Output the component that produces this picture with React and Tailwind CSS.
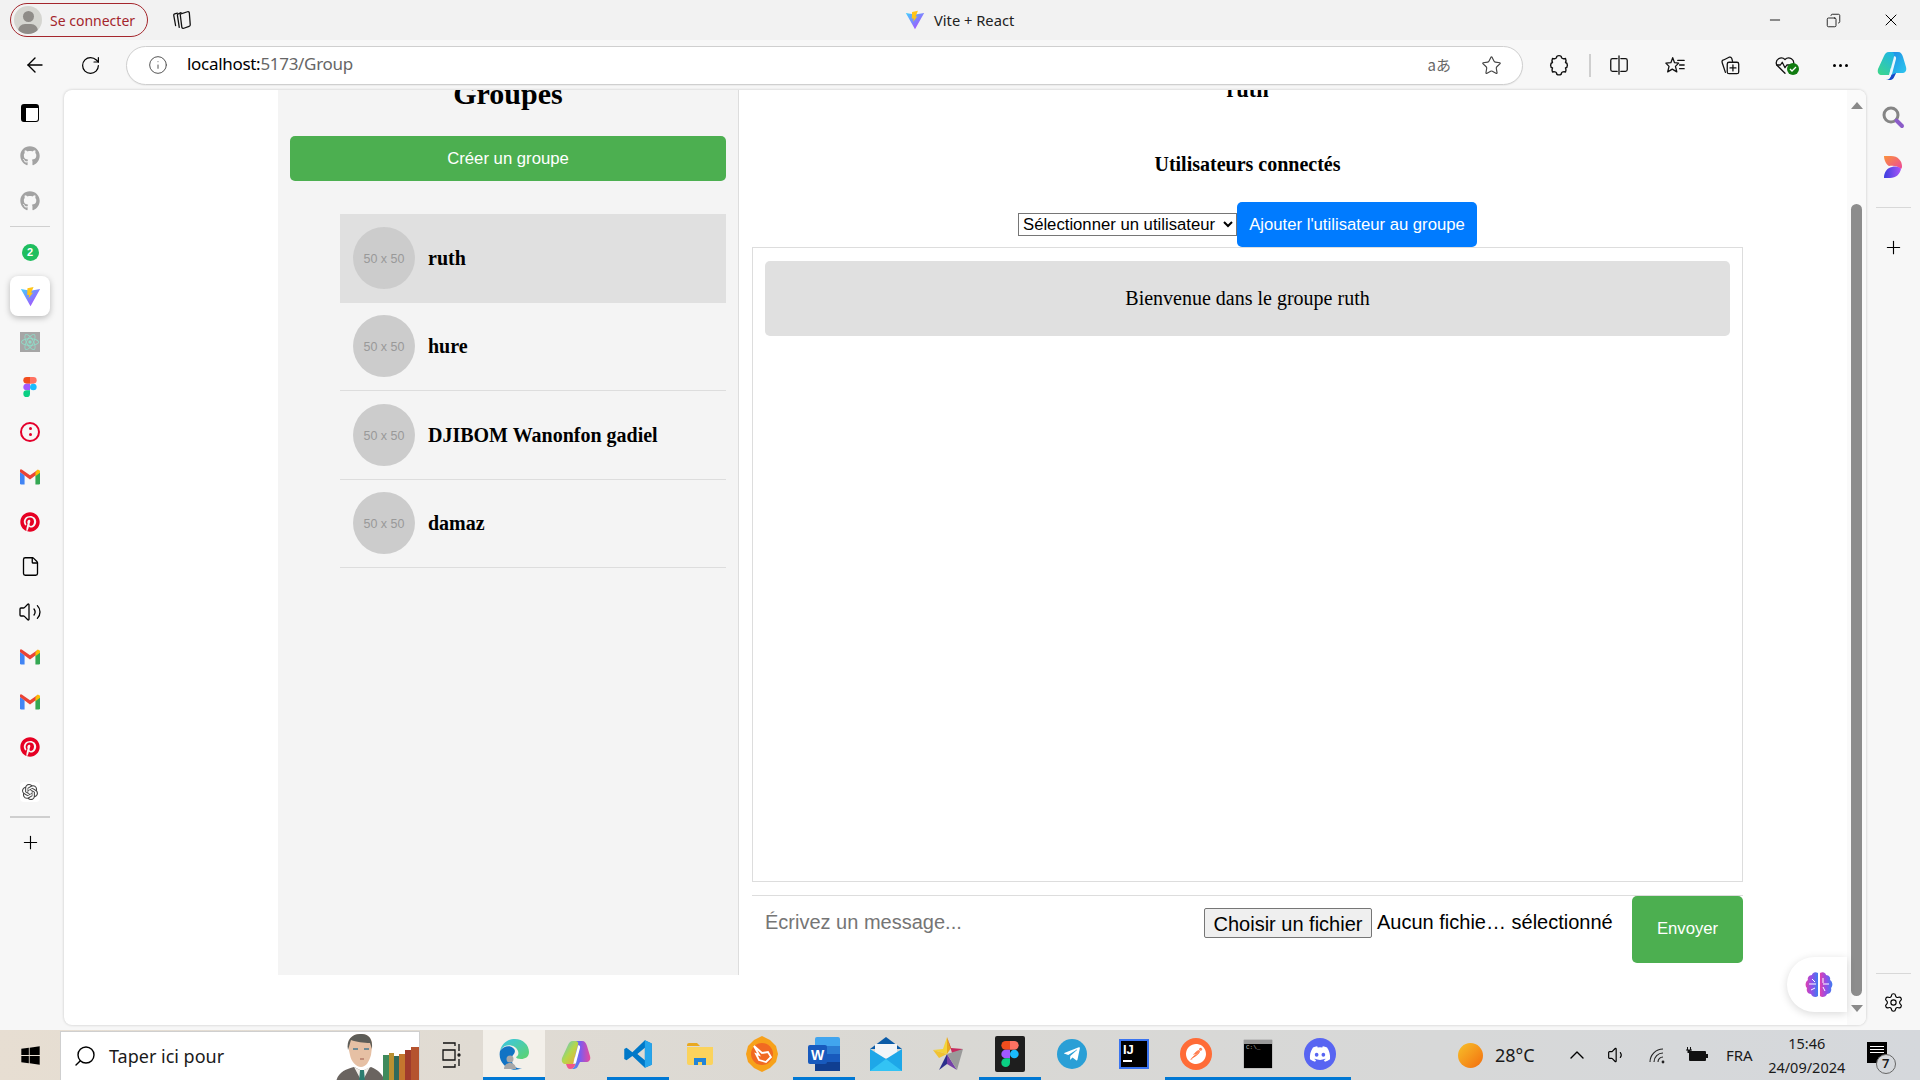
import { ArrowLeft, RotateCw, Info, Star, Plus, Search, Settings, X, Minus, ChevronUp, Volume1, Volume2, File, Copy } from 'lucide-react';
import { FaGithub, FaPinterest, FaTelegramPlane, FaDiscord, FaWindows } from 'react-icons/fa';
import { SiOpenai, SiReact, SiPostman } from 'react-icons/si';

const groups = ['ruth', 'hure', 'DJIBOM Wanonfon gadiel', 'damaz'];

function ViteLogo({ size = 22 }) {
  return (
    <svg width={size} height={size} viewBox="0 0 24 24">
      <defs>
        <linearGradient id="viteA" x1="0" y1="0" x2="1" y2="1">
          <stop offset="0" stopColor="#41d1ff" />
          <stop offset="1" stopColor="#bd34fe" />
        </linearGradient>
      </defs>
      <path d="M1 3.500 12 5.500 23 3.500 12 23Z" fill="url(#viteA)" />
      <path d="M15.500 1 8.500 2.500 8.200 10.500 10.500 10 9.800 14 15 7.500 12.600 8Z" fill="#ffc517" />
    </svg>
  );
}

function FigmaLogo({ size = 22 }) {
  return (
    <svg width={size} height={size} viewBox="0 0 24 36">
      <path d="M12 0H6a6 6 0 0 0 0 12h6Z" fill="#f24e1e" />
      <path d="M12 0h6a6 6 0 0 1 0 12h-6Z" fill="#ff7262" />
      <path d="M12 12H6a6 6 0 0 0 0 12h6Z" fill="#a259ff" />
      <circle cx="18" cy="18" r="6" fill="#1abcfe" />
      <path d="M6 24h6v6a6 6 0 1 1-6-6Z" fill="#0acf83" />
    </svg>
  );
}

function GmailLogo() {
  return (
    <svg width={20} height={16} viewBox="0 0 24 18">
      <path d="M0 3v13.500A1.500 1.500 0 0 0 1.500 18H5.500V7Z" fill="#4285f4" />
      <path d="M18.500 18h4a1.500 1.500 0 0 0 1.500-1.500V3l-5.500 4Z" fill="#34a853" />
      <path d="M0 3 12 12 24 3 21.500 .3 12 7 2.500 .3A1.600 1.600 0 0 0 0 3Z" fill="#ea4335" />
      <path d="M18.500 3.600V8L24 4V2.500C24 .4 22 -.4 20.500 .6Z" fill="#fbbc04" />
    </svg>
  );
}

function CopilotLogo({ size = 32 }) {
  return (
    <svg width={size} height={size} viewBox="0 0 32 32">
      <defs>
        <linearGradient id="copA" x1="0" y1="0" x2="1" y2="1">
          <stop offset="0" stopColor="#1f7fe6" />
          <stop offset="0.6" stopColor="#27b3ea" />
          <stop offset="1" stopColor="#33cdf0" />
        </linearGradient>
        <linearGradient id="copB" x1="0.8" y1="0" x2="0.2" y2="1">
          <stop offset="0" stopColor="#1fb6e4" />
          <stop offset="1" stopColor="#3bd58f" />
        </linearGradient>
      </defs>
      <path d="M15 3H22C25 3 26 5 27 8L30 18C31 22 29 24 26 24H20L17.500 29C16.500 30.500 15 31 13 31H10C13 31 14.500 29 15.500 26Z" fill="url(#copA)" />
      <path d="M13 3C10 3 9 5 8 7L2 20C1 24 3 26 6 26H13L18 7C19 4 17 3 15 3Z" fill="url(#copB)" />
      <path d="M18 7.500 14 23C13.500 25 15 26 16 25L20 10C20.500 8 19 6.500 18 7.500Z" fill="#e8f7fd" />
      <path d="M10 31C13 31 14.500 29 15.500 26L20 24 17.500 29C16.500 30.500 15 31 13 31Z" fill="#1b46c8" />
    </svg>
  );
}

function EdgeLogo() {
  return (
    <svg width={32} height={32} viewBox="0 0 32 32">
      <defs>
        <linearGradient id="edgeA" x1="0" y1="0" x2="1" y2="1">
          <stop offset="0" stopColor="#39c6e8" />
          <stop offset="1" stopColor="#5fd36b" />
        </linearGradient>
      </defs>
      <path d="M2 13C4 4 11 1 17 1c8 0 14 6 14 13 0 5-4 7-8 7-3 0-5-1-5-2 2-1 3-3 2-6C18 8 12 6 7 8c-2 1-4 3-5 5Z" fill="url(#edgeA)" />
      <path d="M2 13c3-5 10-6 13-3 3 2 2 5 0 7-2 3-2 8 2 12 2 1 5 2 7 1-5 3-13 2-18-3C2 23 1 18 2 13Z" fill="#1173c4" />
      <circle cx="12" cy="21" r="3.500" fill="#a7a7a7" />
      <path d="M6 31c0-4 3-6 6-6s6 2 6 6Z" fill="#a7a7a7" />
    </svg>
  );
}

function CopilotTask() {
  return (
    <svg width={32} height={32} viewBox="0 0 32 32">
      <defs>
        <linearGradient id="ctA" x1="0" y1="0" x2="1" y2="0">
          <stop offset="0" stopColor="#2fb4e9" />
          <stop offset="0.5" stopColor="#7b5cf0" />
          <stop offset="1" stopColor="#e9499b" />
        </linearGradient>
        <linearGradient id="ctB" x1="0" y1="0" x2="1" y2="1">
          <stop offset="0" stopColor="#4fc3e8" />
          <stop offset="0.5" stopColor="#b5d84a" />
          <stop offset="1" stopColor="#f6a13c" />
        </linearGradient>
      </defs>
      <path d="M15 3H22C25 3 26 5 27 8L30 18C31 22 29 24 26 24H20L17.500 29C16.500 30.500 15 31 13 31H10C13 31 14.500 29 15.500 26Z" fill="url(#ctA)" />
      <path d="M13 3C10 3 9 5 8 7L2 20C1 24 3 26 6 26H13L18 7C19 4 17 3 15 3Z" fill="url(#ctB)" />
      <path d="M18 7.500 14 23C13.500 25 15 26 16 25L20 10C20.500 8 19 6.500 18 7.500Z" fill="#fff" />
      <path d="M6 26H13C14 26 14.500 26 15.500 26 14.500 29 13 31 10 31 8 31 7 29 6 26Z" fill="#f0578a" />
    </svg>
  );
}

function VsCode() {
  return (
    <svg width={30} height={30} viewBox="0 0 24 24">
      <path d="M17.500 1 23 3.500v17L17.500 23 7.500 13.500 2.800 17 1 16V8l1.800-1 4.700 3.500ZM17.500 7l-6 5 6 5Z" fill="#0078c8" />
      <path d="M17.500 1 23 3.500v17L17.500 23V17L17.500 7Z" fill="#25a5ec" />
    </svg>
  );
}

function FolderIcon() {
  return (
    <svg width={28} height={28} viewBox="0 0 28 28">
      <path d="M1 5a2 2 0 0 1 2-2h8l3 3H1Z" fill="#e9a820" />
      <path d="M1 7h26v16a2 2 0 0 1-2 2H3a2 2 0 0 1-2-2Z" fill="#fbd35c" />
      <path d="M8 18h12v7h-4v-3h-4v3H8Z" fill="#2284d8" />
    </svg>
  );
}

function OrangeApp() {
  return (
    <svg width={32} height={36} viewBox="0 0 32 36">
      <path d="M16 0l8 4 6 6 2 8-2 8-6 6-8 4-8-4-6-6-2-8 2-8 6-6Z" fill="#f7a11a" />
      <circle cx="16" cy="18" r="11" fill="#f16a22" />
      <path d="M8 10l8 7 6-1 3 5-5 5-7-2-3-6 3 1Z" fill="none" stroke="#fff" strokeWidth="1.800" />
    </svg>
  );
}

function WordIcon() {
  return (
    <svg width={32} height={34} viewBox="0 0 32 34">
      <rect x="7" y="0" width="25" height="34" rx="2" fill="#41a5ee" />
      <rect x="7" y="9" width="25" height="8" fill="#2b7cd3" />
      <rect x="7" y="17" width="25" height="8" fill="#185abd" />
      <rect x="7" y="25" width="25" height="9" fill="#103f91" />
      <rect x="0" y="8" width="19" height="19" rx="2" fill="#185abd" />
      <text x="9.500" y="22.500" textAnchor="middle" fontSize="14" fontWeight="700" fill="#fff" fontFamily="Liberation Sans, sans-serif">W</text>
    </svg>
  );
}

function MailIcon() {
  return (
    <svg width={32} height={34} viewBox="0 0 32 34">
      <path d="M16 0 32 12H0Z" fill="#0a5ba8" />
      <rect x="5" y="7" width="22" height="14" fill="#f2f5f8" />
      <path d="M0 12 16 22 32 12V34H0Z" fill="#1ea7e8" />
      <path d="M0 34 16 22 32 34Z" fill="#33c3f4" />
    </svg>
  );
}

function StarApp() {
  return (
    <svg width={32} height={34} viewBox="0 0 32 34">
      <path d="M15 0 19 11 15 17Z" fill="#e8a81c" />
      <path d="M15 0 19 11 31 12 21 19Z" fill="#c72a5e" />
      <path d="M1 13 11 12 15 0 15 17Z" fill="#f4d33b" />
      <path d="M1 13 15 17 7 21Z" fill="#f1c232" />
      <path d="M7 33 15 17 15 27Z" fill="#2b2f8c" />
      <path d="M15 17 25 33 15 27Z" fill="#7440a8" />
      <path d="M15 17 31 12 25 33Z" fill="#9a9a9a" />
    </svg>
  );
}

function FigmaTile() {
  return (
    <div className="flex h-[36px] w-[30px] items-center justify-center rounded-[2px] bg-[#1e1e1e]">
      <FigmaLogo size={26} />
    </div>
  );
}

function IntelliJ() {
  return (
    <div className="flex h-[30px] w-[30px] flex-col bg-black p-[4px] leading-none outline-2 -outline-offset-2 outline-[#3a74f0]">
      <span className="text-[13px] font-bold text-white font-['Liberation_Sans',sans-serif]">IJ</span>
      <span className="mt-[4px] h-[2px] w-[9px] bg-white" />
    </div>
  );
}

function Terminal() {
  return (
    <div className="h-[28px] w-[28px] border-t-[4px] border-[#9a9a9a] bg-black px-[2px] shadow-[0_0_1px_#555]">
      <span className="block text-[6px] leading-[8px] text-[#bbb] font-['Liberation_Mono',monospace]">C:\_</span>
    </div>
  );
}

function BrainIcon() {
  return (
    <svg width={30} height={30} viewBox="0 0 30 30">
      <defs>
        <linearGradient id="brain" x1="0" y1="0" x2="1" y2="0">
          <stop offset="0" stopColor="#e040b0" />
          <stop offset="0.5" stopColor="#9050e8" />
          <stop offset="1" stopColor="#3f7cf0" />
        </linearGradient>
      </defs>
      <path d="M14 3c-3-2-6 0-6 2-3 0-5 3-4 5-3 2-3 6-1 8-1 3 1 6 4 6 1 3 5 4 7 2Z" fill="url(#brain)" />
      <path d="M16 3c3-2 6 0 6 2 3 0 5 3 4 5 3 2 3 6 1 8 1 3-1 6-4 6-1 3-5 4-7 2Z" fill="url(#brain)" />
      <path d="M5 14h7M8 9l3 3M7 20l4-2M19 8v5M25 14h-6M21 21l-2-4" stroke="#fff" strokeWidth="1" fill="none" />
    </svg>
  );
}

function Portrait() {
  return (
    <svg width={85} height={50} viewBox="0 0 85 50">
      <path d="M2 50c2-10 10-13 18-15l8 4 9-4c7 3 12 7 14 15Z" fill="#6a6460" />
      <path d="M20 35l8 15 8-15-8 4Z" fill="#f0ede8" />
      <path d="M26 38h4l1 12h-6Z" fill="#2b7d70" />
      <path d="M14 14c0-9 6-12 13-12s12 4 11 13l-1 8c-2 7-5 12-10 12s-10-6-11-12Z" fill="#e6c0a4" />
      <path d="M14 18c-2-10 4-16 12-16 8-1 13 4 12 15l-2-6c-6 0-14-1-19-3Z" fill="#5d5d58" />
      <path d="M19 17h5M30 17h5" stroke="#4a7a90" strokeWidth="1.500" />
      <path d="M26 27h4" stroke="#a8685a" strokeWidth="1.200" />
      <rect x="49" y="23" width="6" height="27" fill="#3f8a5c" />
      <rect x="55" y="21" width="5" height="29" fill="#b99032" />
      <rect x="60" y="24" width="5" height="26" fill="#2f6a5c" />
      <rect x="65" y="22" width="6" height="28" fill="#c4762e" />
      <rect x="71" y="18" width="6" height="32" fill="#a03b2c" />
      <rect x="77" y="15" width="8" height="35" fill="#b5532e" />
    </svg>
  );
}

function Stroke({ size = 22, children }) {
  return (
    <svg width={size} height={size} viewBox="0 0 24 24" fill="none" stroke="#111" strokeWidth="1.400" strokeLinecap="round" strokeLinejoin="round">
      {children}
    </svg>
  );
}

function RailSlot({ children, h = 'h-[45px]' }) {
  return <div className={`flex w-full items-center justify-center ${h}`}>{children}</div>;
}

function Rail() {
  const github = <FaGithub size={20} className="text-[#a3a3a3]" />;
  const gmail = <GmailLogo />;
  const pin = <FaPinterest size={20} className="text-[#e60023]" />;
  return (
    <div className="flex w-16 shrink-0 flex-col items-center pt-[3px] pr-1">
      <RailSlot h="h-[40px]">
        <span className="block h-[18px] w-[18px] rounded-[3px] border-[1.500px] border-t-[4px] border-l-[5px] border-black bg-white" />
      </RailSlot>
      <RailSlot>{github}</RailSlot>
      <RailSlot>{github}</RailSlot>
      <div className="my-[3px] h-[1px] w-10 bg-[#d0d0d0]" />
      <RailSlot>
        <span className="flex h-[17px] w-[17px] items-center justify-center rounded-full bg-[#1fbe5f] text-[11px] font-bold text-white font-['Liberation_Sans',sans-serif]">2</span>
      </RailSlot>
      <div className="mt-[1px] mb-[3px] flex h-10 w-10 shrink-0 items-center justify-center rounded-lg bg-white shadow-[0_2px_6px_rgba(0,0,0,0.25)]">
        <ViteLogo size={21} />
      </div>
      <RailSlot>
        <span className="flex h-5 w-5 items-center justify-center bg-[#a6a6a6] text-[#8fdcc8]"><SiReact size={18} /></span>
      </RailSlot>
      <RailSlot><FigmaLogo size={20} /></RailSlot>
      <RailSlot>
        <span className="flex h-5 w-5 flex-col items-center justify-center gap-[3px] rounded-full border-2 border-[#e4002b]">
          <span className="h-[3px] w-[3px] rounded-full bg-[#e4002b]" />
          <span className="h-[3px] w-[3px] rounded-full bg-[#e4002b]" />
        </span>
      </RailSlot>
      <RailSlot>{gmail}</RailSlot>
      <RailSlot>{pin}</RailSlot>
      <RailSlot><File size={21} strokeWidth={1.5} className="text-black" /></RailSlot>
      <RailSlot><Volume2 size={24} strokeWidth={1.3} className="text-black" /></RailSlot>
      <RailSlot>{gmail}</RailSlot>
      <RailSlot>{gmail}</RailSlot>
      <RailSlot>{pin}</RailSlot>
      <RailSlot>
        <span className="flex h-5 w-5 items-center justify-center rounded bg-white text-[#444]"><SiOpenai size={16} /></span>
      </RailSlot>
      <div className="my-[2px] h-[2px] w-10 shrink-0 bg-[#cfcfcf]" />
      <RailSlot h="h-[44px]"><Plus size={21} strokeWidth={1.3} className="text-black" /></RailSlot>
    </div>
  );
}

function Sidebar() {
  return (
    <div className="h-[885px] w-[461px] shrink-0 overflow-hidden border-r border-[#ddd] bg-[#f4f4f4] px-3">
      <h2 className="-mt-[13px] mb-[25px] text-center text-[30px] leading-[34px] font-bold text-black">Groupes</h2>
      <button className="h-[45px] w-full rounded-[5px] bg-[#4caf50] text-[16.700px] text-white font-['Liberation_Sans',sans-serif]">Créer un groupe</button>
      <ul className="mt-[33px] ml-[50px]">
        {groups.map((name, i) => (
          <li key={name} className={i === 0 ? 'flex h-[88.500px] items-center gap-[13px] bg-[#e0e0e0] px-[13px]' : 'flex h-[88.500px] items-center gap-[13px] border-b border-[#ddd] px-[13px]'}>
            <span className="flex h-[62px] w-[62px] shrink-0 items-center justify-center rounded-full bg-[#ccc] pt-[3px] text-[12.500px] text-[#999] font-['Liberation_Sans',sans-serif]">50 x 50</span>
            <span className="text-[20px] font-bold text-black">{name}</span>
          </li>
        ))}
      </ul>
    </div>
  );
}

function Chat() {
  return (
    <div className="w-[1017px] shrink-0 overflow-hidden px-[13px]">
      <h2 className="-mt-[13px] text-center text-[22.500px] leading-[26px] font-bold text-black">ruth</h2>
      <h3 className="mt-[50px] text-center text-[20px] leading-[23px] font-bold text-black">Utilisateurs connectés</h3>
      <div className="mt-[26px] flex items-center justify-center font-['Liberation_Sans',sans-serif]">
        <select className="h-[23px] w-[219px] border border-[#767676] bg-white text-[16.700px] text-black">
          <option>Sélectionner un utilisateur</option>
        </select>
        <button className="h-[45px] w-[240px] rounded-[5px] bg-[#007bff] text-[16.700px] text-white">Ajouter l'utilisateur au groupe</button>
      </div>
      <div className="h-[635px] border border-[#ddd] px-[12px] py-[13px]">
        <div className="flex h-[75px] items-center justify-center rounded-[5px] bg-[#e0e0e0] pb-[1px] text-[20px] text-black">Bienvenue dans le groupe ruth</div>
      </div>
      <div className="mt-[13px] flex items-start border-t border-[#ddd] font-['Liberation_Sans',sans-serif]">
        <input placeholder="Écrivez un message..." className="h-[52px] w-[452px] px-[13px] text-[20px] placeholder:text-[#757575]" />
        <button className="mt-[12px] h-[30px] w-[168px] rounded-[2px] border border-[#767676] bg-[#efefef] pb-[4px] text-[20px] text-black">Choisir un fichier</button>
        <span className="mt-[11px] ml-[5px] text-[20px] text-black">Aucun fichie… sélectionné</span>
        <button className="ml-auto h-[67px] w-[111px] rounded-[5px] bg-[#4caf50] pb-[2px] text-[16.700px] text-white">Envoyer</button>
      </div>
    </div>
  );
}

const taskApps = [
  { el: <CopilotTask /> },
  { el: <VsCode />, line: true },
  { el: <FolderIcon /> },
  { el: <OrangeApp /> },
  { el: <WordIcon />, line: true },
  { el: <MailIcon /> },
  { el: <StarApp /> },
  { el: <FigmaTile />, line: true },
  { el: <span className="flex h-[30px] w-[30px] items-center justify-center rounded-full bg-[#2a9fd6] text-white"><FaTelegramPlane size={18} /></span> },
  { el: <IntelliJ /> },
  { el: <span className="flex h-[32px] w-[32px] items-center justify-center rounded-full bg-[#ff6c37] text-white"><SiPostman size={20} /></span>, line: true },
  { el: <Terminal />, line: true },
  { el: <span className="flex h-[32px] w-[32px] items-center justify-center rounded-full bg-[#5865f2] text-white"><FaDiscord size={22} /></span>, line: true },
];

function Taskbar() {
  return (
    <div className="flex h-[50px] shrink-0 items-stretch bg-linear-to-r from-[#e7ded2] via-[#d9d8d4] to-[#d5d8dc] font-['Noto_Sans',sans-serif] text-[#1a1a1a]">
      <div className="flex w-[60px] items-center justify-center"><FaWindows size={21} className="text-black" /></div>
      <div className="mt-[1px] flex w-[360px] items-center overflow-hidden border-x border-t border-[#cfcfcf] bg-white pl-[12px]">
        <Search size={24} strokeWidth={1.4} className="-scale-x-100 text-black" />
        <span className="ml-[12px] text-[18px]">Taper ici pour</span>
        <span className="mt-auto ml-auto"><Portrait /></span>
      </div>
      <div className="flex w-[63px] items-center justify-center">
        <svg width={20} height={26} viewBox="0 0 20 26" fill="none" stroke="#111" strokeWidth="1.300">
          <path d="M1 1h12v3M1 25h12v-3M1 8h12v10H1Z" />
          <path d="M17 2v7M17 17v7" />
          <circle cx="17" cy="13" r="1" />
        </svg>
      </div>
      <div className="flex w-[62px] items-center justify-center border-b-[3px] border-[#0078d4] bg-[#f3f0ea]"><EdgeLogo /></div>
      {taskApps.map((app, i) => (
        <div key={i} className={app.line ? 'flex w-[62px] items-center justify-center border-b-[3px] border-[#0078d4]' : 'flex w-[62px] items-center justify-center pb-[3px]'}>
          {app.el}
        </div>
      ))}
      <div className="ml-[107px] flex items-center">
        <span className="h-[25px] w-[25px] rounded-full bg-linear-to-br from-[#f5c02a] to-[#f26b0c]" />
        <span className="ml-[12px] w-[70px] text-[18px]">28°C</span>
        <ChevronUp size={24} strokeWidth={1.4} className="text-black" />
        <Volume1 size={20} strokeWidth={1.4} className="ml-[18px] text-black" />
        <span className="ml-[20px]">
          <svg width={20} height={20} viewBox="0 0 20 20" fill="none" stroke="#222" strokeWidth="1.100">
            <path d="M11 17a5 5 0 0 1 5-5M7 17a9 9 0 0 1 9-9M3 17A13 13 0 0 1 16 4" />
            <circle cx="16" cy="17" r="1.400" fill="#222" stroke="none" />
          </svg>
        </span>
        <span className="ml-[19px]">
          <svg width={22} height={16} viewBox="0 0 22 16" fill="#111">
            <rect x="3" y="4" width="17" height="10" rx="1" />
            <rect x="20" y="7" width="2" height="4" />
            <path d="M0 3h6M1.500 0v3M4.500 0v3" stroke="#111" fill="none" strokeWidth="1" />
            <rect x="1.500" y="3" width="3" height="3" />
          </svg>
        </span>
        <span className="ml-[18px] text-[15px]">FRA</span>
        <div className="ml-[14px] flex w-[80px] flex-col items-center text-[14.500px] leading-[24px]">
          <span>15:46</span>
          <span>24/09/2024</span>
        </div>
        <div className="relative ml-[20px] flex h-[21px] w-[20px] -translate-y-[3px] flex-col gap-[2px] bg-black px-[3px] pt-[4px]">
          <span className="h-[1px] w-full bg-white" />
          <span className="h-[1px] w-full bg-white" />
          <span className="h-[1px] w-full bg-white" />
          <span className="absolute top-[12px] left-[9px] flex h-[20px] w-[20px] items-center justify-center rounded-full border border-[#666] bg-[#d5d8dc] text-[13px] font-semibold">7</span>
        </div>
      </div>
    </div>
  );
}

export default function App() {
  return (
    <div className="flex h-screen flex-col overflow-hidden bg-[#f7f7f7] font-['Liberation_Serif',serif]">
      {/* Title bar */}
      <div className="flex h-10 shrink-0 items-center bg-[#f2f2f2] pl-[10px] font-['Noto_Sans',sans-serif]">
        <div className="flex h-[34px] w-[138px] items-center rounded-full border border-[#a4262c] pl-[3px]">
          <span className="relative h-[28px] w-[28px] overflow-hidden rounded-full bg-[#d5d5d0]">
            <span className="absolute top-[5px] left-[9px] h-[11px] w-[11px] rounded-full bg-[#8f8c88]" />
            <span className="absolute top-[18px] left-[4px] h-[14px] w-[20px] rounded-full bg-[#8f8c88]" />
          </span>
          <span className="ml-[8px] text-[14px] text-[#a4262c]">Se connecter</span>
        </div>
        <span className="ml-[23px]">
          <Stroke>
            <path d="M5 18 3 7c-.2-1 .3-1.500 1-1.700L7 4.500" />
            <path d="M9 20 7 7c-.2-1 .3-1.500 1-1.700L11 4" />
            <path d="M10 5.500 18 3c1-.3 2 .3 2 1.300L21 17c.1 1-.3 1.700-1.300 2L14 21c-1 .3-2-.2-2.200-1.300Z" />
          </Stroke>
        </span>
        <div className="ml-[712px] flex w-[116px] items-center gap-[9px] text-[14.700px] text-[#222]">
          <ViteLogo size={20} />
          <span className="whitespace-nowrap">Vite + React</span>
        </div>
        <div className="ml-auto flex items-center">
          <span className="flex w-[58px] justify-center"><Minus size={16} strokeWidth={1.3} className="text-black" /></span>
          <span className="flex w-[58px] justify-center"><Copy size={15} strokeWidth={1.3} className="-scale-x-100 text-black" /></span>
          <span className="flex w-[58px] justify-center"><X size={20} strokeWidth={1.2} className="text-black" /></span>
        </div>
      </div>

      {/* Address bar */}
      <div className="flex h-[50px] shrink-0 items-center font-['Noto_Sans',sans-serif]">
        <span className="flex w-[70px] justify-center"><ArrowLeft size={24} strokeWidth={1.4} className="text-black" /></span>
        <span className="flex w-[40px] justify-center"><RotateCw size={21} strokeWidth={1.4} className="text-black" /></span>
        <div className="ml-[16px] flex h-[39px] w-[1397px] items-center rounded-full border border-[#cfcfcf] bg-white pl-[21px] shadow-[0_1px_1px_rgba(0,0,0,0.05)]">
          <Info size={20} strokeWidth={1.2} className="text-[#555]" />
          <span className="-mt-[2px] ml-[19px] text-[17px] tracking-[-0.3px] text-[#666]"><span className="text-black">localhost:</span>5173/Group</span>
          <span className="ml-auto text-[15px] text-[#666] font-['Noto_Sans_CJK_JP',sans-serif]">aあ</span>
          <Star size={21} strokeWidth={1.3} className="mr-[20px] ml-[30px] text-[#444]" />
        </div>
        <span className="ml-[24px] flex w-[24px] justify-center">
          <Stroke size={24}>
            <path d="M9.500 4.500c0-2.500 5-2.500 5 0 0 1 2.500 1.500 4 1 1 2 .5 3 0 4 2.500.5 2.500 5 0 5.500.5 1 1 2 0 4-1.500-.5-4 0-4 1 0 2.500-5 2.500-5 0 0-1-2.500-1.500-4-1-1-2-.5-3 0-4-2.500-.5-2.500-5 0-5.500-.5-1-1-2 0-4 1.500.5 4 0 4-1Z" />
          </Stroke>
        </span>
        <span className="ml-[18px] h-[23px] w-[2px] bg-[#cfcfcf]" />
        <span className="ml-[16px] flex w-[24px] justify-center">
          <Stroke>
            <path d="M10 5H5a2 2 0 0 0-2 2v10a2 2 0 0 0 2 2h5M14 5h5a2 2 0 0 1 2 2v10a2 2 0 0 1-2 2h-5M12 2v20" />
          </Stroke>
        </span>
        <span className="ml-[32px] flex w-[24px] justify-center">
          <Stroke>
            <path d="M9.500 4 11.500 9.500 16 10 12.500 13.500 14 19.500 9 16.500 4 19.500 5.500 13.500 2 10 7.500 9.500Z" />
            <path d="M15 7h7M17 12h5M17 16h5" />
          </Stroke>
        </span>
        <span className="ml-[31px] flex w-[24px] justify-center">
          <Stroke>
            <path d="M7 20 3.500 9.500C3 8 3.500 7 5 6.500L11 3.500c1.500-.5 2.500 0 3 1.500l.8 3" />
            <rect x="9" y="9" width="12.500" height="12.500" rx="2" />
            <path d="M15.200 12v6.500M12 15.200h6.500" />
          </Stroke>
        </span>
        <span className="relative ml-[31px] flex w-[24px] justify-center">
          <Stroke>
            <path d="M12 21 3 12a5.500 5.500 0 0 1 9-6 5.500 5.500 0 0 1 9 6" />
            <path d="M3 12h4l2-3 3 6 2-3h3" />
          </Stroke>
          <span className="absolute top-[9px] left-[14px] flex h-[12px] w-[12px] items-center justify-center rounded-full bg-[#107c10]">
            <svg width={8} height={8} viewBox="0 0 8 8" fill="none" stroke="#fff" strokeWidth="1.300"><path d="M1 4l2 2 4-4" /></svg>
          </span>
        </span>
        <span className="ml-[31px] flex w-[24px] justify-center gap-[3px]">
          <span className="h-[3px] w-[3px] rounded-full bg-black" />
          <span className="h-[3px] w-[3px] rounded-full bg-black" />
          <span className="h-[3px] w-[3px] rounded-full bg-black" />
        </span>
        <span className="ml-[24px]"><CopilotLogo /></span>
      </div>

      {/* Main */}
      <div className="flex min-h-0 flex-1">
        <Rail />
        <div className="relative mb-[5px] flex flex-1 overflow-hidden rounded-lg bg-white pl-[214px] shadow-[0_0_3px_rgba(0,0,0,0.2)]">
          <Sidebar />
          <Chat />
          <div className="absolute top-0 right-0 flex h-full w-[19px] flex-col items-center bg-[#fafafa]">
            <span className="mt-[12px] h-0 w-0 border-x-[6px] border-b-[7px] border-x-transparent border-b-[#8a8a8a]" />
            <span className="mt-[95px] h-[792px] w-[11px] shrink-0 rounded-full bg-[#8d8d8d]" />
            <span className="mt-[9px] h-0 w-0 border-x-[6px] border-t-[7px] border-x-transparent border-t-[#8a8a8a]" />
          </div>
          <div className="absolute top-[867px] right-[19px] flex h-[55px] w-[60px] items-center justify-center rounded-l-[28px] bg-white pl-[3px] shadow-[0_2px_8px_rgba(0,0,0,0.15)]">
            <BrainIcon />
          </div>
        </div>
        <div className="flex w-[54px] shrink-0 flex-col items-center pt-[15px]">
          <svg width={24} height={24} viewBox="0 0 24 24" fill="none">
            <circle cx="10" cy="10" r="7" stroke="#858585" strokeWidth="3" />
            <path d="M15.500 15.500 21 21" stroke="#8b5cc8" strokeWidth="4" strokeLinecap="round" />
          </svg>
          <svg width={20} height={22} viewBox="0 0 20 22" className="mt-[27px]">
            <defs>
              <linearGradient id="dsA" x1="0" y1="0" x2="1" y2="1">
                <stop offset="0" stopColor="#fb923c" />
                <stop offset="1" stopColor="#ec4899" />
              </linearGradient>
              <linearGradient id="dsB" x1="0" y1="0" x2="1" y2="0">
                <stop offset="0" stopColor="#3b3fe0" />
                <stop offset="1" stopColor="#a855f7" />
              </linearGradient>
            </defs>
            <path d="M1 0h7c7 0 11 5 11 10 0 1 0 2-1 3-3-3-8-4-12-3C4 9 1 5 1 0Z" fill="url(#dsA)" />
            <path d="M1 22c0-6 3-10 8-11 4-1 8 0 9 2-1 5-5 9-11 9Z" fill="url(#dsB)" />
          </svg>
          <div className="mt-[29px] h-[1px] w-[35px] bg-[#d8d8d8]" />
          <Plus size={21} strokeWidth={1.3} className="mt-[29px] text-black" />
          <div className="mt-auto mb-[17px] flex flex-col items-center">
            <div className="mb-[18px] h-[1px] w-[35px] bg-[#d8d8d8]" />
            <Settings size={21} strokeWidth={1.3} className="text-black" />
          </div>
        </div>
      </div>

      <Taskbar />
    </div>
  );
}
